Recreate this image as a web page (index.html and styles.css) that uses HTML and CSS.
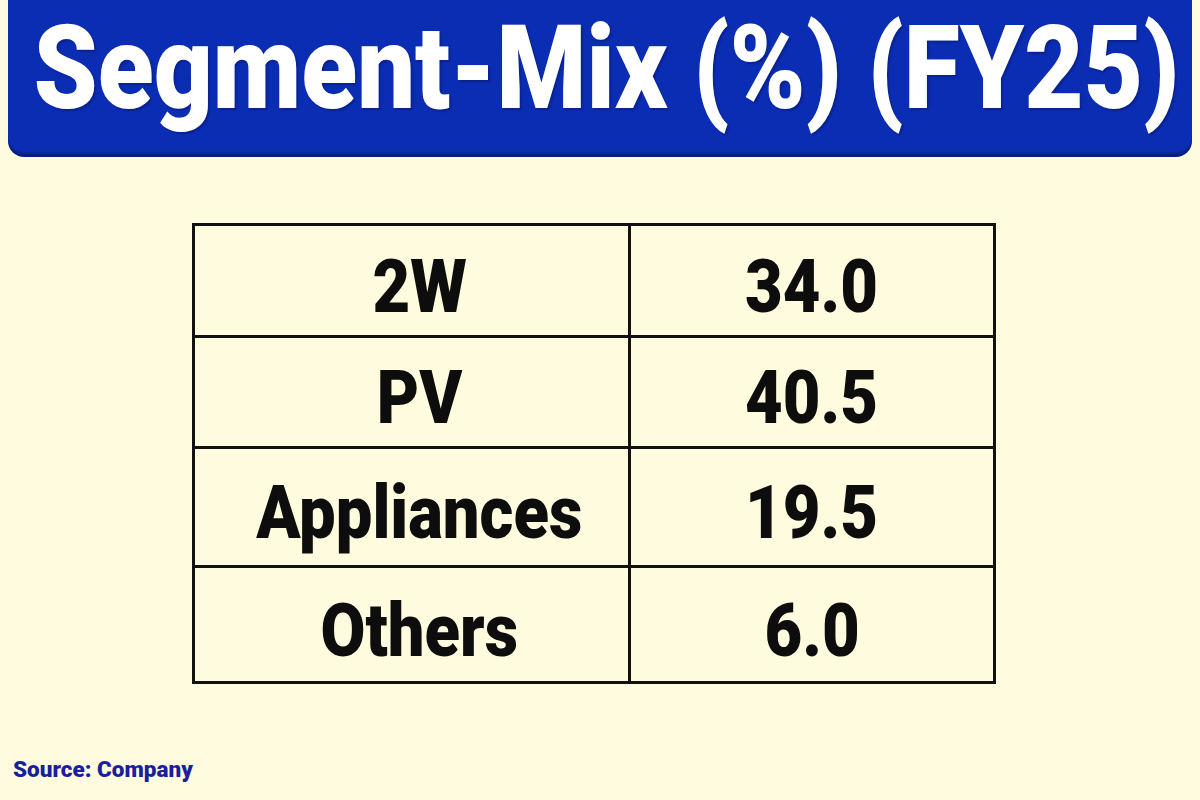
FILE: index.html
```html
<!DOCTYPE html>
<html lang="en">
<head>
<meta charset="utf-8">
<title>Segment-Mix (%) (FY25)</title>
<link rel="stylesheet" href="styles.css">
</head>
<body>
<div class="page">
  <header class="banner">
    <h1 class="title">Segment-Mix (%) (FY25)</h1>
  </header>
  <main class="content">
    <div class="table">
      <div class="cell label"><span>2W</span></div>
      <div class="cell value"><span>34.0</span></div>
      <div class="cell label"><span>PV</span></div>
      <div class="cell value"><span>40.5</span></div>
      <div class="cell label"><span>Appliances</span></div>
      <div class="cell value"><span>19.5</span></div>
      <div class="cell label last"><span>Others</span></div>
      <div class="cell value last"><span>6.0</span></div>
    </div>
  </main>
  <footer class="source">Source: Company</footer>
</div>
</body>
</html>
```

FILE: styles.css
```css
html, body {
  margin: 0;
  padding: 0;
}
body {
  background: #fffbdf;
  width: 1200px;
  height: 800px;
  overflow: hidden;
  font-family: Roboto, "Liberation Sans", sans-serif;
}
.page {
  display: flex;
  flex-direction: column;
  height: 800px;
}
.banner {
  margin: 0 8px;
  padding-left: 12px;
  height: 154px;
  background: #0b2db3;
  border-radius: 0 0 16px 16px;
  box-shadow: 0 3px 0 #081e82, inset 0 -2px 0 #0a2698;
  display: flex;
  justify-content: center;
  align-items: flex-start;
}
.title {
  margin: 0;
  padding-top: 8px;
  font-size: 116px;
  line-height: 120px;
  font-weight: 900;
  color: #ffffff;
  white-space: nowrap;
  display: inline-block;
  transform: scaleX(0.885);
  text-shadow: 2px 2px 2px rgba(0, 0, 40, 0.25);
}
.content {
  display: flex;
  justify-content: flex-start;
  padding-top: 69px;
  padding-left: 192px;
}
.table {
  display: grid;
  grid-template-columns: 436px 362px;
  grid-template-rows: 112px 111px 119px 113px;
  border: 3px solid #111;
}
.cell {
  display: flex;
  align-items: center;
  justify-content: center;
  border-bottom: 3px solid #111;
  padding-top: 12px;
  box-sizing: border-box;
}
.cell span {
  display: inline-block;
  font-size: 74px;
  line-height: 80px;
  font-weight: 900;
  color: #0d0d0d;
  transform: scaleX(0.88);
  white-space: nowrap;
}
.cell.label {
  border-right: 3px solid #111;
  padding-left: 16px;
}
.cell.last {
  border-bottom: none;
}
.source {
  margin-top: auto;
  margin-bottom: 18px;
  padding-left: 13px;
  font-size: 22.5px;
  font-weight: 900;
  color: #1a1f9c;
}
```
